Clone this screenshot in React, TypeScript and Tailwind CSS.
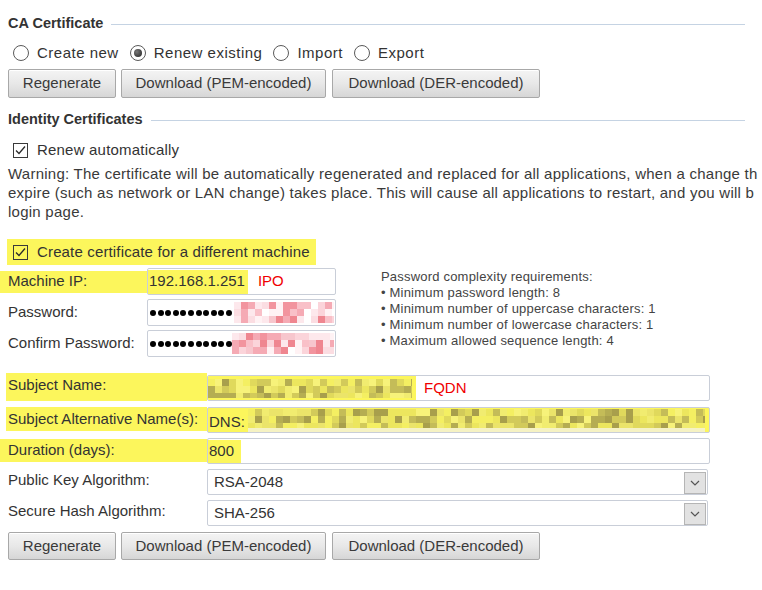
import React from "react";

function rng(seed: number) {
  let s = seed;
  return () => {
    s = (s * 16807) % 2147483647;
    return (s - 1) / 2147483646;
  };
}

const YELLOW = ["#f4ef62", "#ece65e", "#e0d95c", "#d2ca5a", "#c4bc58", "#b5ad52", "#f7f27a", "#a89f4c", "#ebe46a", "#f1ec70"];
const PINK = ["#fde8ec", "#fbd4da", "#f9c0c8", "#f5aab4", "#f2949e", "#fff2f4", "#f7c6cd", "#ffffff", "#fbdde2", "#ef8690"];

function Mosaic({ w, h, cell, seed, palette }: { w: number; h: number; cell: number; seed: number; palette: string[] }) {
  const r = rng(seed);
  const cols = Math.ceil(w / cell);
  const rows = Math.ceil(h / cell);
  const rects: React.ReactNode[] = [];
  for (let y = 0; y < rows; y++) {
    for (let x = 0; x < cols; x++) {
      const c = palette[Math.floor(r() * palette.length)];
      rects.push(<rect key={`${x}-${y}`} x={x * cell} y={y * cell} width={cell} height={cell} fill={c} />);
    }
  }
  return (
    <svg width={w} height={h} className="block shrink-0" shapeRendering="crispEdges">
      {rects}
    </svg>
  );
}

function Radio({ checked, label }: { checked?: boolean; label: string }) {
  return (
    <div className="flex items-center">
      <div className="w-[16px] h-[16px] rounded-full border border-[#5a5a5a] bg-white flex items-center justify-center">
        {checked && <div className="w-[8px] h-[8px] rounded-full bg-[radial-gradient(circle_at_35%_35%,#777,#222)]" />}
      </div>
      <span className="ml-[8px] tracking-[0.5px]">{label}</span>
    </div>
  );
}

function Check() {
  return (
    <svg width="15" height="15" viewBox="0 0 15 15" className="block shrink-0">
      <rect x="0.5" y="0.5" width="14" height="14" fill="none" stroke="#3a3a3a" />
      <path d="M3 7.5 L6 10.5 L12 3.5" fill="none" stroke="#2a2a2a" strokeWidth="1.3" />
    </svg>
  );
}

function Btn({ w, children }: { w: string; children: React.ReactNode }) {
  return (
    <button
      className={`${w} h-full border border-[#a8a8a8] rounded-[2px] bg-gradient-to-b from-[#f4f4f4] via-[#e8e8e8] to-[#d6d6d6] text-[15px] text-[#3a3a3a] shadow-[inset_0_1px_0_#fff]`}
    >
      {children}
    </button>
  );
}

function Buttons({ h }: { h: string }) {
  return (
    <div className={`flex ${h}`}>
      <Btn w="w-[108px]">Regenerate</Btn>
      <div className="w-[5px]" />
      <Btn w="w-[205px]">Download (PEM-encoded)</Btn>
      <div className="w-[6px]" />
      <Btn w="w-[208px]">Download (DER-encoded)</Btn>
    </div>
  );
}

function Heading({ children }: { children: React.ReactNode }) {
  return (
    <div className="flex items-center h-[20px] mr-[17px]">
      <span className="font-bold text-[14.5px] text-[#333]">{children}</span>
      <div className="flex-1 h-px bg-[#c5d3e3] ml-[8px]" />
    </div>
  );
}

function Chevron() {
  return (
    <div className="absolute right-[1px] top-[2px] w-[22px] h-[22px] bg-[#e2e2e2] border border-[#b5b5b5] flex items-center justify-center">
      <svg width="10" height="6" viewBox="0 0 10 6">
        <path d="M1 1 L5 5 L9 1" fill="none" stroke="#555" strokeWidth="1.2" />
      </svg>
    </div>
  );
}

function Dots() {
  return (
    <div className="flex gap-[1.6px] pl-[2px] shrink-0">
      {Array.from({ length: 11 }).map((_, i) => (
        <div key={i} className="w-[6px] h-[6px] rounded-full bg-black" />
      ))}
    </div>
  );
}

export default function App() {
  return (
    <div className="w-[762px] h-[590px] bg-white text-[#333] text-[15px] font-['Liberation_Sans',Arial,sans-serif] pl-[8px] pt-[14px] overflow-hidden">
      <Heading>CA Certificate</Heading>
      <div className="flex items-center h-[18px] mt-[10px] pl-[5px] gap-[11px]">
        <Radio label="Create new" />
        <Radio checked label="Renew existing" />
        <Radio label="Import" />
        <Radio label="Export" />
      </div>
      <div className="mt-[7px]">
        <Buttons h="h-[29px]" />
      </div>

      <div className="mt-[12px]">
        <Heading>Identity Certificates</Heading>
      </div>
      <div className="flex items-center h-[18px] mt-[11px] pl-[5px]">
        <Check />
        <span className="ml-[9px] tracking-[0.2px]">Renew automatically</span>
      </div>
      <div className="mt-[5px] leading-[19px] whitespace-nowrap tracking-[0.25px] text-[#3a3a3a]">
        <div>Warning: The certificate will be automatically regenerated and replaced for all applications, when a change th</div>
        <div>expire (such as network or LAN change) takes place. This will cause all applications to restart, and you will b</div>
        <div>login page.</div>
      </div>

      <div className="mt-[18px] flex items-center h-[26px] w-[309px] -ml-[1px] pl-[6px] bg-[#fcf65c]">
        <Check />
        <span className="ml-[9px] tracking-[0.15px]">Create certificate for a different machine</span>
      </div>

      <div className="flex mt-[3px]">
        <div className="flex flex-col w-[328px]">
          <div className="flex items-center h-[27px]">
            <div className="-ml-[8px] pl-[8px] w-[147px] h-[22px] bg-[#fcf65c] flex items-center">Machine IP:</div>
            <div className="flex-1 h-full border border-[#c9ced8] rounded-[2px] flex items-center bg-white">
              <span className="bg-[#fcf65c] h-[24px] flex items-center pl-[1px] pr-[3px]">192.168.1.251</span>
              <span className="ml-[10px] text-[#f00000]">IPO</span>
            </div>
          </div>
          <div className="flex items-center h-[27px] mt-[4px]">
            <div className="w-[139px]">Password:</div>
            <div className="flex-1 h-full border border-[#c9ced8] rounded-[2px] flex items-center bg-white overflow-hidden">
              <Dots />
              <div className="ml-[2px]">
                <Mosaic w={100} h={21} cell={7} seed={11} palette={PINK} />
              </div>
            </div>
          </div>
          <div className="flex items-center h-[27px] mt-[4px]">
            <div className="w-[139px]">Confirm Password:</div>
            <div className="flex-1 h-full border border-[#c9ced8] rounded-[2px] flex items-center bg-white overflow-hidden">
              <Dots />
              <div className="ml-[0px]">
                <Mosaic w={102} h={21} cell={7} seed={29} palette={PINK} />
              </div>
            </div>
          </div>
        </div>
        <div className="ml-[45px] pt-[1px] text-[13px] leading-[16px] tracking-[0.2px] text-[#444]">
          <div>Password complexity requirements:</div>
          <div>• Minimum password length: 8</div>
          <div>• Minimum number of uppercase characters: 1</div>
          <div>• Minimum number of lowercase characters: 1</div>
          <div>• Maximum allowed sequence length: 4</div>
        </div>
      </div>

      <div className="flex mt-[18px] h-[26px]">
        <div className="-ml-[2px] pl-[2px] w-[201px] h-[28px] -mt-[2px] bg-[#fcf65c] pt-[1px]">Subject Name:</div>
        <div className="w-[503px] h-full border border-[#c9ced8] rounded-[2px] flex items-center bg-white overflow-hidden">
          <div className="bg-[#fcf65c] h-full flex items-center pr-[4px]">
            <Mosaic w={204} h={19} cell={7} seed={5} palette={YELLOW} />
          </div>
          <span className="ml-[8px] text-[#f00000]">FQDN</span>
        </div>
      </div>

      <div className="flex mt-[6px] h-[26px]">
        <div className="-ml-[2px] pl-[2px] w-[201px] h-[24px] bg-[#fcf65c] pt-[1px]">Subject Alternative Name(s):</div>
        <div className="w-[503px] h-full border border-[#c9ced8] rounded-[2px] bg-[#fcf65c] relative overflow-hidden flex items-start">
          <span className="ml-[1px] mt-[3px]">DNS:</span>
          <div className="flex flex-col mt-[1px] ml-[3px]">
            <Mosaic w={457} h={19} cell={7} seed={41} palette={YELLOW} />
            <div className="h-[6px] w-[457px] bg-[#f5f2c4]" />
          </div>
        </div>
      </div>

      <div className="flex mt-[5px] h-[26px]">
        <div className="-ml-[8px] pl-[8px] w-[207px] h-[23px] mt-[1px] bg-[#fcf65c]">Duration (days):</div>
        <div className="w-[503px] h-full border border-[#c9ced8] rounded-[2px] bg-white flex items-center">
          <span className="bg-[#fcf65c] h-[23px] flex items-center pl-[1px] w-[33px]">800</span>
        </div>
      </div>

      <div className="flex mt-[5px] h-[26px]">
        <div className="w-[199px]">Public Key Algorithm:</div>
        <div className="w-[501px] h-full border border-[#c9ced8] rounded-[2px] bg-white relative flex items-center pl-[6px]">
          <span>RSA-2048</span>
          <Chevron />
        </div>
      </div>

      <div className="flex mt-[5px] h-[26px]">
        <div className="w-[199px]">Secure Hash Algorithm:</div>
        <div className="w-[501px] h-full border border-[#c9ced8] rounded-[2px] bg-white relative flex items-center pl-[6px]">
          <span>SHA-256</span>
          <Chevron />
        </div>
      </div>

      <div className="mt-[6px]">
        <Buttons h="h-[28px]" />
      </div>
    </div>
  );
}
